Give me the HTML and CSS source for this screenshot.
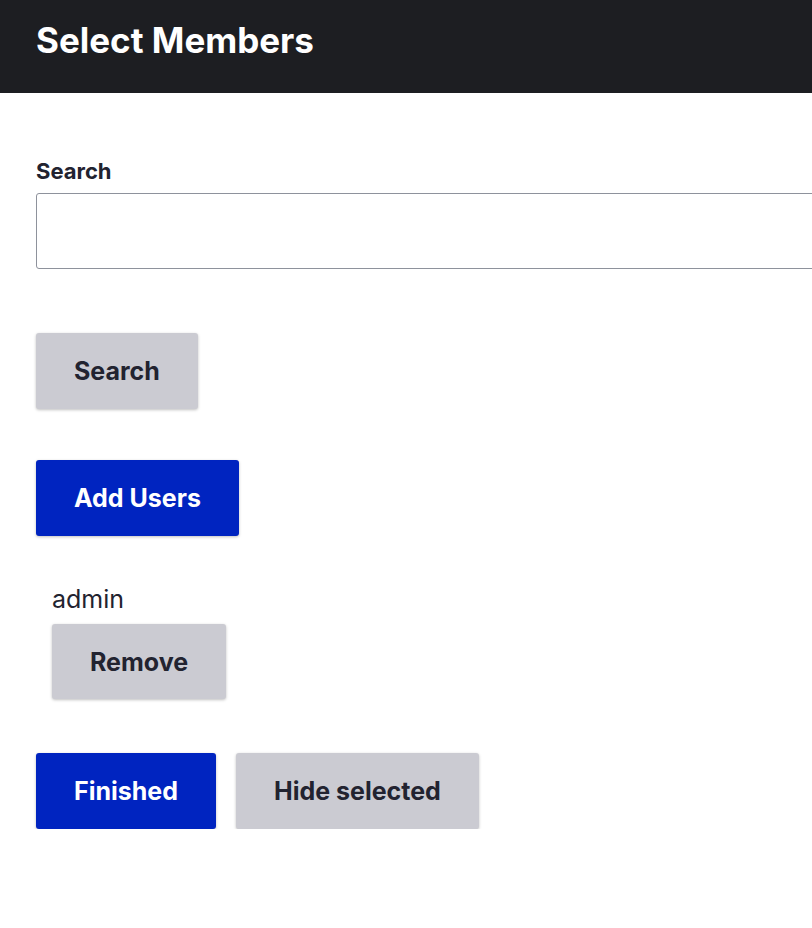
FILE: index.html
```html
<!DOCTYPE html>
<html>
<head>
<meta charset="utf-8">
<link rel="stylesheet" href="styles.css">
</head>
<body>
<header class="topbar"><h1 class="title">Select Members</h1></header>
<main class="content">
  <div class="field">
    <label class="label" for="q">Search</label>
    <input class="input" id="q" type="text">
  </div>
  <div class="actions"><button class="btn btn-gray">Search</button></div>
  <div class="actions"><button class="btn btn-blue">Add Users</button></div>
  <div class="selected">
    <div class="user-name">admin</div>
    <button class="btn btn-gray">Remove</button>
  </div>
  <div class="actions row">
    <button class="btn btn-blue">Finished</button>
    <button class="btn btn-gray">Hide selected</button>
  </div>
</main>
</body>
</html>
```
FILE: styles.css
```css
* { box-sizing: border-box; }
html, body { margin: 0; padding: 0; }
body {
  font-family: Inter, "Noto Sans", sans-serif;
  color: #222330;
  background: #fff;
  overflow: hidden;
}
.topbar {
  background: #1d1e22;
  height: 93px;
  padding: 0 36px;
  display: flex;
  align-items: flex-start;
}
.title {
  margin: 18px 0 0;
  font-size: 35px;
  line-height: 44px;
  font-weight: 700;
  color: #fff;
}
.content { padding: 0 0 0 36px; }
.field { margin-top: 65px; }
.label {
  display: block;
  font-size: 22px;
  font-weight: 700;
  line-height: 26px;
  margin-bottom: 9px;
  color: #222330;
}
.input {
  display: block;
  width: 800px;
  height: 76px;
  border: 1px solid #8e929c;
  border-radius: 3px;
  background: #fff;
}
.actions { margin-top: 64px; }
.actions + .actions { margin-top: 51px; }
.row { display: flex; gap: 20px; }
.btn {
  font-family: inherit;
  font-size: 25px;
  font-weight: 700;
  line-height: 36px;
  height: 76px;
  padding: 0 38px;
  border: 0;
  border-radius: 3px;
  box-shadow: 0 1px 3px rgba(0,0,0,0.25);
  cursor: pointer;
}
.btn-gray { background: #cbcbd2; color: #222330; }
.btn-blue { background: #0024c0; color: #fff; }
.selected { margin-top: 48px; padding-left: 16px; }
.user-name {
  font-size: 25px;
  line-height: 30px;
  margin-bottom: 10px;
  color: #222330;
}
.selected .btn { height: 75px; }
.selected + .row { margin-top: 54px; }
```
